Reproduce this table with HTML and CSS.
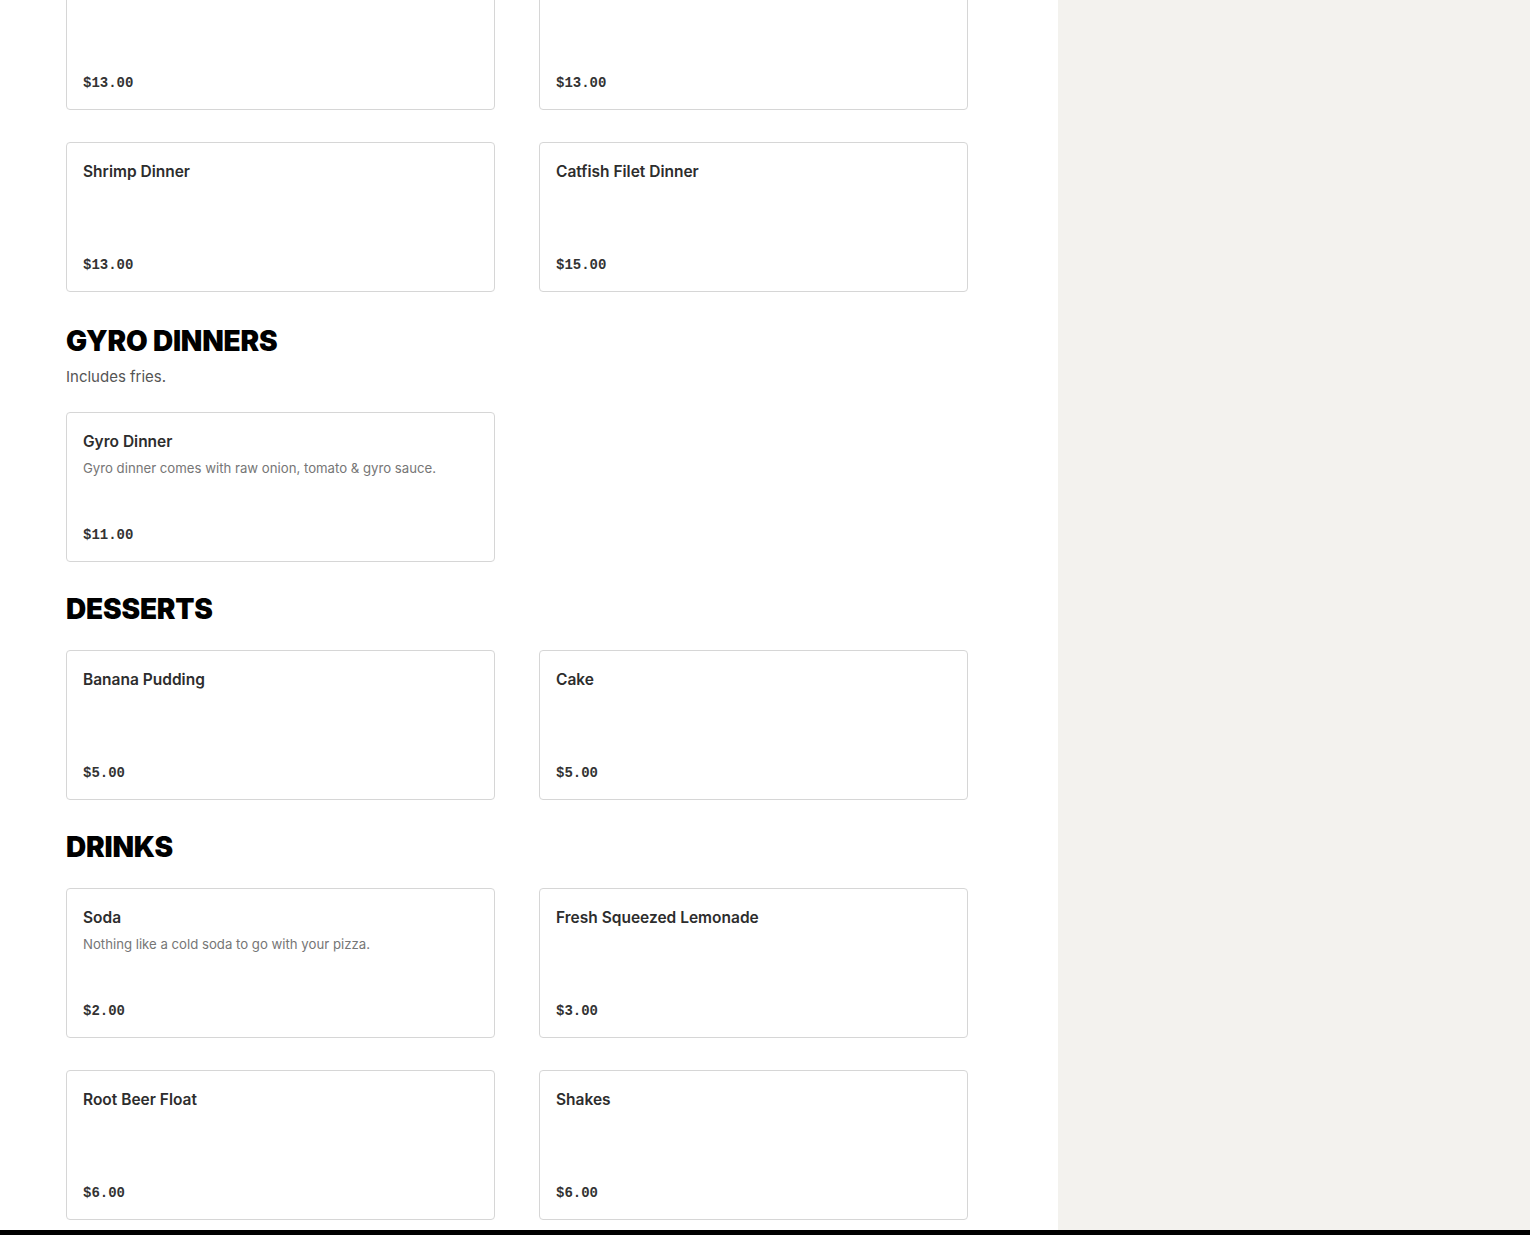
FILE: index.html
```html
<!DOCTYPE html>
<html lang="en">
<head>
  <meta charset="UTF-8">
  <meta name="viewport" content="width=device-width, initial-scale=1.0">
  <title>Menu</title>
  <link rel="stylesheet" href="styles.css">
</head>
<body>
  <div class="page">
    <main class="menu">
      <section class="menu-section first">
        <div class="item-grid">
          <div class="item">
            <h3 class="item-name">Wings Dinner</h3>
            <p class="item-price">$13.00</p>
          </div>
          <div class="item">
            <h3 class="item-name">Chicken Strip Dinner</h3>
            <p class="item-price">$13.00</p>
          </div>
          <div class="item">
            <h3 class="item-name">Shrimp Dinner</h3>
            <p class="item-price">$13.00</p>
          </div>
          <div class="item">
            <h3 class="item-name">Catfish Filet Dinner</h3>
            <p class="item-price">$15.00</p>
          </div>
        </div>
      </section>

      <section class="menu-section">
        <div class="section-head">
          <h2>Gyro Dinners</h2>
          <p class="section-desc">Includes fries.</p>
        </div>
        <div class="item-grid">
          <div class="item">
            <h3 class="item-name">Gyro Dinner</h3>
            <p class="item-desc">Gyro dinner comes with raw onion, tomato &amp; gyro sauce.</p>
            <p class="item-price">$11.00</p>
          </div>
        </div>
      </section>

      <section class="menu-section">
        <div class="section-head">
          <h2>Desserts</h2>
        </div>
        <div class="item-grid">
          <div class="item">
            <h3 class="item-name">Banana Pudding</h3>
            <p class="item-price">$5.00</p>
          </div>
          <div class="item">
            <h3 class="item-name">Cake</h3>
            <p class="item-price">$5.00</p>
          </div>
        </div>
      </section>

      <section class="menu-section">
        <div class="section-head">
          <h2>Drinks</h2>
        </div>
        <div class="item-grid">
          <div class="item">
            <h3 class="item-name">Soda</h3>
            <p class="item-desc">Nothing like a cold soda to go with your pizza.</p>
            <p class="item-price">$2.00</p>
          </div>
          <div class="item">
            <h3 class="item-name">Fresh Squeezed Lemonade</h3>
            <p class="item-price">$3.00</p>
          </div>
          <div class="item">
            <h3 class="item-name">Root Beer Float</h3>
            <p class="item-price">$6.00</p>
          </div>
          <div class="item">
            <h3 class="item-name">Shakes</h3>
            <p class="item-price">$6.00</p>
          </div>
        </div>
      </section>
    </main>
    <aside class="sidebar"></aside>
  </div>
  <footer class="site-footer"></footer>
</body>
</html>
```

FILE: styles.css
```css
* {
  margin: 0;
  padding: 0;
  box-sizing: border-box;
}
body {
  font-family: 'Inter', 'Liberation Sans', sans-serif;
  color: #2d2d2d;
  background: #fff;
}
.page {
  display: flex;
  align-items: stretch;
}
.menu {
  width: 1058px;
  padding: 0 90px 10px 66px;
  margin-top: -40px;
}
.sidebar {
  flex: 1;
  background: #f3f2ee;
}
.menu-section {
  padding-top: 29px;
}
.menu-section.first {
  padding-top: 0;
  margin-bottom: 2px;
}
.section-head {
  display: flex;
  flex-direction: column;
  gap: 6px;
  margin-bottom: 23px;
}
.section-head h2 {
  font-size: 28px;
  line-height: 36px;
  font-weight: 900;
  text-transform: uppercase;
  color: #000;
  letter-spacing: -0.2px;
}
.section-desc {
  font-size: 15px;
  line-height: 24px;
  color: #555;
}
.item-grid {
  display: grid;
  grid-template-columns: 1fr 1fr;
  column-gap: 44px;
  row-gap: 32px;
}
.item {
  display: flex;
  flex-direction: column;
  height: 150px;
  padding: 17px 16px 16px;
  border: 1px solid #d6d6d6;
  border-radius: 4px;
  background: #fff;
}
.item-name {
  font-size: 15.5px;
  line-height: 24px;
  font-weight: 600;
  color: #2d2d2d;
}
.item-desc {
  margin-top: 4px;
  font-size: 13.2px;
  line-height: 20px;
  color: #767676;
}
.item-price {
  margin-top: auto;
  font-family: 'Liberation Mono', monospace;
  font-size: 14px;
  line-height: 20px;
  font-weight: 700;
  color: #333;
}
.site-footer {
  height: 60px;
  background: #000;
}
```
